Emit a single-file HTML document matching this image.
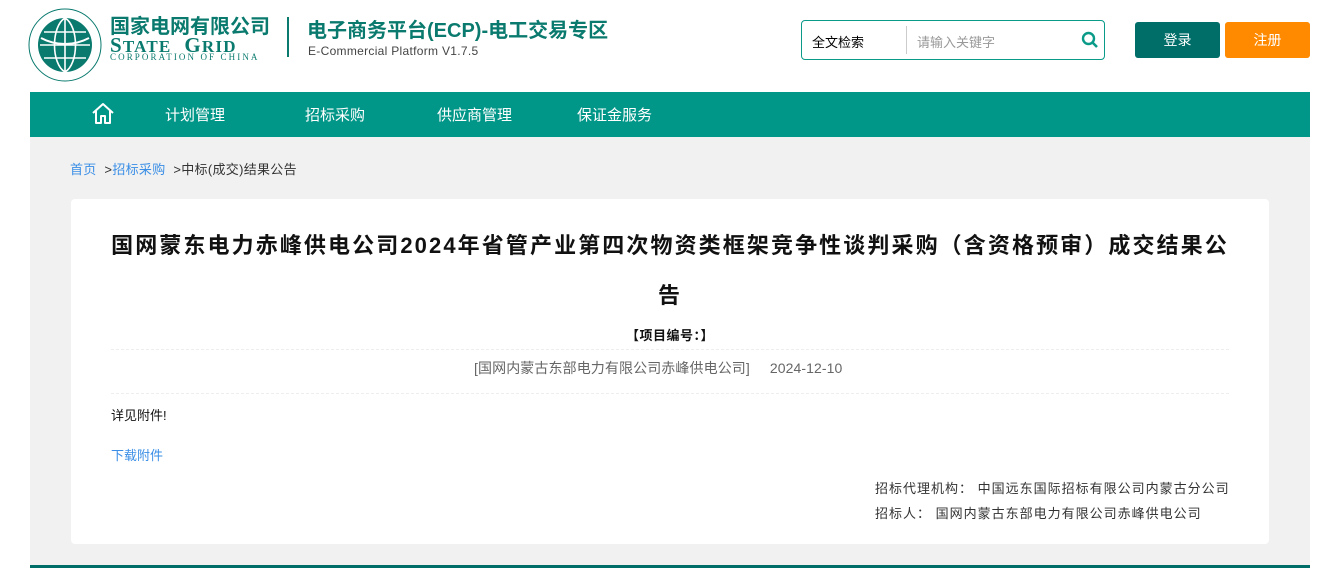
<!DOCTYPE html>
<html><head><meta charset="utf-8"><style>
*{margin:0;padding:0;box-sizing:border-box}
body{width:1339px;height:568px;background:#fff;font-family:"Liberation Sans","Noto Sans CJK SC",sans-serif;position:relative;overflow:hidden;font-size:13px;color:#333}
.a{position:absolute}
</style></head><body>
<svg class="a" style="left:28px;top:8px" width="74" height="74" viewBox="0 0 74 74">
<circle cx="37" cy="37" r="36" fill="none" stroke="#0a7a6e" stroke-width="1"/>
<circle cx="37" cy="37" r="27" fill="#0a7a6e"/>
<path d="M12 37h50M37 10v54M16 24h42M16 50h42M37 10c-14 8-14 46 0 54M37 10c14 8 14 46 0 54" stroke="#fff" stroke-width="1.6" fill="none"/>
<path d="M13 30c15 8 33 8 48 0" stroke="#fff" stroke-width="2" fill="none"/>
</svg>
<div class="a" style="left:110px;top:10px;font-size:20px;font-weight:bold;color:#0a7a6e">国家电网有限公司</div>
<div class="a" style="left:110px;top:33px;font-family:'Liberation Serif',serif;font-size:21px;font-weight:bold;color:#0a7a6e;letter-spacing:1.2px">S<span style="font-size:17px">TATE</span>&nbsp;&nbsp;G<span style="font-size:17px">RID</span></div>
<div class="a" style="left:110px;top:52px;font-family:'Liberation Serif',serif;font-size:9px;color:#0a7a6e;letter-spacing:2.1px">CORPORATION OF CHINA</div>
<div class="a" style="left:287px;top:17px;width:2px;height:40px;background:#0a7a6e"></div>
<div class="a" style="left:307px;top:14px;font-size:20px;font-weight:bold;color:#0a7a6e">电子商务平台(ECP)-电工交易专区</div>
<div class="a" style="left:308px;top:44px;font-size:12px;color:#444;letter-spacing:0.3px">E-Commercial Platform V1.7.5</div>
<div class="a" style="left:801px;top:20px;width:304px;height:40px;border:1px solid #0a9a88;border-radius:4px"></div>
<div class="a" style="left:812px;top:32px;font-size:13px;color:#000">全文检索</div>
<div class="a" style="left:906px;top:26px;width:1px;height:28px;background:#ccc"></div>
<div class="a" style="left:917px;top:32px;font-size:13px;color:#999">请输入关键字</div>
<svg class="a" style="left:1081px;top:31px" width="18" height="18" viewBox="0 0 18 18"><circle cx="7.5" cy="7.5" r="5.5" fill="none" stroke="#0a9a88" stroke-width="2.4"/><path d="M11.5 11.5l4.5 4.5" stroke="#0a9a88" stroke-width="2.6"/></svg>
<div class="a" style="left:1135px;top:22px;width:85px;height:36px;background:#006e68;border-radius:3px;color:#fff;font-size:14px;text-align:center;line-height:36px">登录</div>
<div class="a" style="left:1225px;top:22px;width:85px;height:36px;background:#ff8a00;border-radius:3px;color:#fff;font-size:14px;text-align:center;line-height:36px">注册</div>
<div class="a" style="left:30px;top:92px;width:1280px;height:45px;background:#009688"></div>
<svg class="a" style="left:90px;top:101px" width="26" height="26" viewBox="0 0 26 26"><path d="M3 12L13 3l10 9M6 10v12h5v-7h4v7h5V10" fill="none" stroke="#fff" stroke-width="2" stroke-linejoin="round"/></svg>
<div class="a" style="left:165px;top:104px;font-size:15px;color:#fff">计划管理</div>
<div class="a" style="left:305px;top:104px;font-size:15px;color:#fff">招标采购</div>
<div class="a" style="left:437px;top:104px;font-size:15px;color:#fff">供应商管理</div>
<div class="a" style="left:577px;top:104px;font-size:15px;color:#fff">保证金服务</div>
<div class="a" style="left:30px;top:137px;width:1280px;height:428px;background:#f1f1f1"></div>
<div class="a" style="left:30px;top:565px;width:1280px;height:3px;background:#006e68"></div>
<div class="a" style="left:70px;top:159px;font-size:13px;color:#333;letter-spacing:0.3px"><span style="color:#3a8ee6">首页</span>&nbsp; &gt;<span style="color:#3a8ee6">招标采购</span>&nbsp; &gt;中标(成交)结果公告</div>
<div class="a" style="left:71px;top:199px;width:1198px;height:345px;background:#fff;border-radius:4px"></div>
<div class="a" style="left:71px;top:221px;width:1198px;text-align:center;font-size:22px;font-weight:bold;color:#111;line-height:50px;letter-spacing:2.1px">国网蒙东电力赤峰供电公司2024年省管产业第四次物资类框架竞争性谈判采购（含资格预审）成交结果公<br>告</div>
<div class="a" style="left:71px;top:325px;width:1198px;text-align:center;font-size:13px;font-weight:bold;color:#111;letter-spacing:0.5px">【项目编号：】</div>
<div class="a" style="left:111px;top:349px;width:1118px;border-top:1px dashed #eee"></div>
<div class="a" style="left:474px;top:358px;font-size:14px;color:#666;letter-spacing:0.1px">[国网内蒙古东部电力有限公司赤峰供电公司]&nbsp;&nbsp;&nbsp;&nbsp;&nbsp;2024-12-10</div>
<div class="a" style="left:111px;top:393px;width:1118px;border-top:1px dashed #eee"></div>
<div class="a" style="left:111px;top:405px;font-size:13px;color:#111">详见附件!</div>
<div class="a" style="left:111px;top:445px;font-size:13px;color:#3a8ee6">下载附件</div>
<div class="a" style="left:875px;top:478px;font-size:13px;color:#333;letter-spacing:1px">招标代理机构：&nbsp;中国远东国际招标有限公司内蒙古分公司</div>
<div class="a" style="left:875px;top:503px;font-size:13px;color:#333;letter-spacing:1px">招标人：&nbsp;国网内蒙古东部电力有限公司赤峰供电公司</div>
</body></html>
